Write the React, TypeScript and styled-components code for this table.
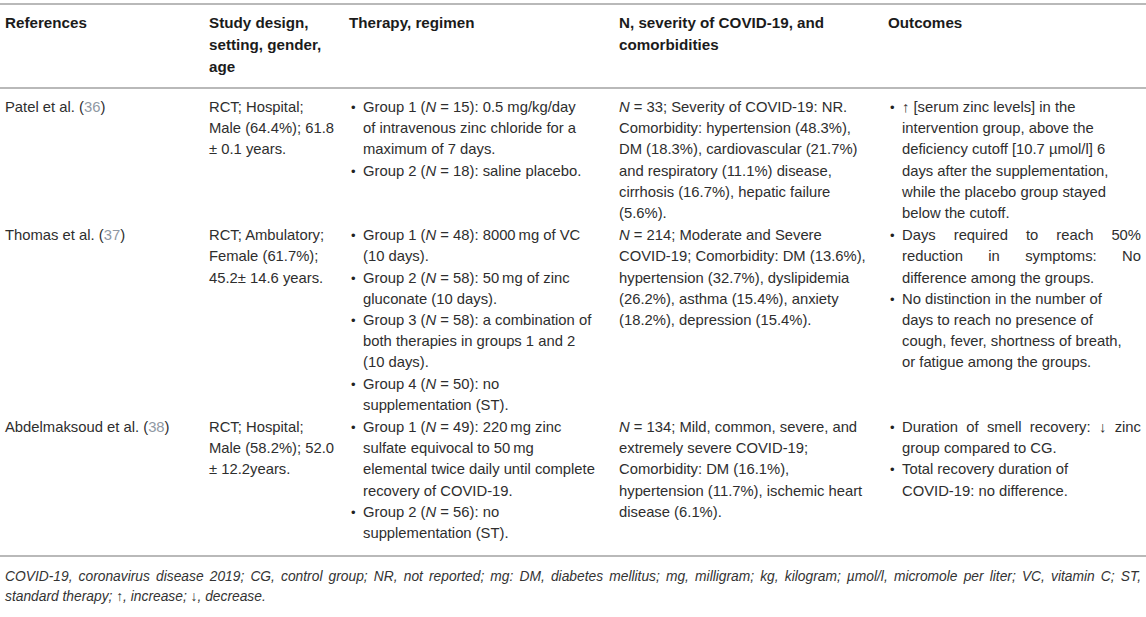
import React from "react";
import styled, { createGlobalStyle } from "styled-components";

const GlobalStyle = createGlobalStyle`
  html, body { margin: 0; padding: 0; background: #ffffff; }
  body { font-family: "Liberation Sans", Arial, Helvetica, sans-serif; }
`;

const Page = styled.div`
  padding-top: 3px;
  width: 1146px;
`;

const Table = styled.div`
  border-top: 2px solid #b9b9b9;
  border-bottom: 2px solid #b9b9b9;
`;

const Row = styled.div<{ $head?: boolean; $last?: boolean }>`
  display: grid;
  grid-template-columns: 204px 140px 270px 269px 263px;
  padding-top: ${(p) => (p.$head ? "7px" : "0")};
  padding-bottom: ${(p) => (p.$head ? "9px" : p.$last ? "11px" : "1px")};
  border-bottom: ${(p) => (p.$head ? "2px solid #b9b9b9" : "none")};
  margin-bottom: ${(p) => (p.$head ? "8px" : "0")};
`;

const Cell = styled.div<{ $head?: boolean }>`
  padding: 0 5px 0 5px;
  font-size: ${(p) => (p.$head ? "15.2px" : "14.8px")};
  line-height: ${(p) => (p.$head ? "22px" : "21.2px")};
  font-weight: ${(p) => (p.$head ? 700 : 400)};
  color: ${(p) => (p.$head ? "#1b1b1b" : "#2e2e2e")};
`;

const Line = styled.span<{ $justify?: boolean }>`
  display: block;
  white-space: nowrap;
  text-align-last: ${(p) => (p.$justify ? "justify" : "auto")};
`;

const List = styled.ul`
  margin: 0;
  padding: 0;
  list-style: none;
`;

const Item = styled.li`
  display: flex;
`;

const Bullet = styled.span`
  flex: 0 0 12px;
  padding-left: 2px;
  font-size: 13px;
  color: #222222;
`;

const ItemBody = styled.div`
  flex: 1;
  min-width: 0;
`;

const Ref = styled.span`
  color: #8f98a3;
`;

const It = styled.i`
  font-style: italic;
`;

const Foot = styled.div`
  padding: 10px 5px 0 5px;
  font-size: 13.8px;
  line-height: 20px;
  font-style: italic;
  color: #333333;
`;

type L = React.ReactNode;

const Para = ({ lines, justify }: { lines: L[]; justify?: boolean }) => (
  <>
    {lines.map((l, i) => (
      <Line key={i} $justify={justify && i < lines.length - 1}>
        {l}
      </Line>
    ))}
  </>
);

const Bullets = ({ items, justify }: { items: L[][]; justify?: boolean[] }) => (
  <List>
    {items.map((lines, i) => (
      <Item key={i}>
        <Bullet>•</Bullet>
        <ItemBody>
          <Para lines={lines} justify={justify ? justify[i] : false} />
        </ItemBody>
      </Item>
    ))}
  </List>
);

const n = <It>N</It>;

type RowData = {
  ref: L;
  design: L[];
  therapy: L[][];
  sev: L[];
  outcomes: L[][];
  justify?: boolean[];
};

const rows: RowData[] = [
  {
    ref: (
      <>
        Patel et al. (<Ref>36</Ref>)
      </>
    ),
    design: ["RCT; Hospital;", "Male (64.4%); 61.8", "± 0.1 years."],
    therapy: [
      [<>Group 1 ({n} = 15): 0.5 mg/kg/day</>, "of intravenous zinc chloride for a", "maximum of 7 days."],
      [<>Group 2 ({n} = 18): saline placebo.</>],
    ],
    sev: [
      <>{n} = 33; Severity of COVID-19: NR.</>,
      "Comorbidity: hypertension (48.3%),",
      "DM (18.3%), cardiovascular (21.7%)",
      "and respiratory (11.1%) disease,",
      "cirrhosis (16.7%), hepatic failure",
      "(5.6%).",
    ],
    outcomes: [
      [
        "↑ [serum zinc levels] in the",
        "intervention group, above the",
        "deficiency cutoff [10.7 µmol/l] 6",
        "days after the supplementation,",
        "while the placebo group stayed",
        "below the cutoff.",
      ],
    ],
  },
  {
    ref: (
      <>
        Thomas et al. (<Ref>37</Ref>)
      </>
    ),
    design: ["RCT; Ambulatory;", "Female (61.7%);", "45.2± 14.6 years."],
    therapy: [
      [<>Group 1 ({n} = 48): 8000{"\u2009"}mg of VC</>, "(10 days)."],
      [<>Group 2 ({n} = 58): 50{"\u2009"}mg of zinc</>, "gluconate (10 days)."],
      [<>Group 3 ({n} = 58): a combination of</>, "both therapies in groups 1 and 2", "(10 days)."],
      [<>Group 4 ({n} = 50): no</>, "supplementation (ST)."],
    ],
    sev: [
      <>{n} = 214; Moderate and Severe</>,
      "COVID-19; Comorbidity: DM (13.6%),",
      "hypertension (32.7%), dyslipidemia",
      "(26.2%), asthma (15.4%), anxiety",
      "(18.2%), depression (15.4%).",
    ],
    outcomes: [
      ["Days required to reach 50%", "reduction in symptoms: No", "difference among the groups."],
      [
        "No distinction in the number of",
        "days to reach no presence of",
        "cough, fever, shortness of breath,",
        "or fatigue among the groups.",
      ],
    ],
    justify: [true, false],
  },
  {
    ref: (
      <>
        Abdelmaksoud et al. (<Ref>38</Ref>)
      </>
    ),
    design: ["RCT; Hospital;", "Male (58.2%); 52.0", "± 12.2years."],
    therapy: [
      [
        <>Group 1 ({n} = 49): 220{"\u2009"}mg zinc</>,
        <>sulfate equivocal to 50{"\u2009"}mg</>,
        "elemental twice daily until complete",
        "recovery of COVID-19.",
      ],
      [<>Group 2 ({n} = 56): no</>, "supplementation (ST)."],
    ],
    sev: [
      <>{n} = 134; Mild, common, severe, and</>,
      "extremely severe COVID-19;",
      "Comorbidity: DM (16.1%),",
      "hypertension (11.7%), ischemic heart",
      "disease (6.1%).",
    ],
    outcomes: [
      ["Duration of smell recovery: ↓ zinc", "group compared to CG."],
      ["Total recovery duration of", "COVID-19: no difference."],
    ],
    justify: [true, false],
  },
];

export default function App() {
  return (
    <Page>
      <GlobalStyle />
      <Table>
        <Row $head>
          <Cell $head>
            <Para lines={["References"]} />
          </Cell>
          <Cell $head>
            <Para lines={["Study design,", "setting, gender,", "age"]} />
          </Cell>
          <Cell $head>
            <Para lines={["Therapy, regimen"]} />
          </Cell>
          <Cell $head>
            <Para lines={["N, severity of COVID-19, and", "comorbidities"]} />
          </Cell>
          <Cell $head>
            <Para lines={["Outcomes"]} />
          </Cell>
        </Row>
        {rows.map((r, i) => (
          <Row key={i} $last={i === rows.length - 1}>
            <Cell>
              <Para lines={[r.ref]} />
            </Cell>
            <Cell>
              <Para lines={r.design} />
            </Cell>
            <Cell>
              <Bullets items={r.therapy} />
            </Cell>
            <Cell>
              <Para lines={r.sev} />
            </Cell>
            <Cell>
              <Bullets items={r.outcomes} justify={r.justify} />
            </Cell>
          </Row>
        ))}
      </Table>
      <Foot>
        <Para
          justify
          lines={[
            "COVID-19, coronavirus disease 2019; CG, control group; NR, not reported; mg: DM, diabetes mellitus; mg, milligram; kg, kilogram; µmol/l, micromole per liter; VC, vitamin C; ST,",
            "standard therapy; ↑, increase; ↓, decrease.",
          ]}
        />
      </Foot>
    </Page>
  );
}
